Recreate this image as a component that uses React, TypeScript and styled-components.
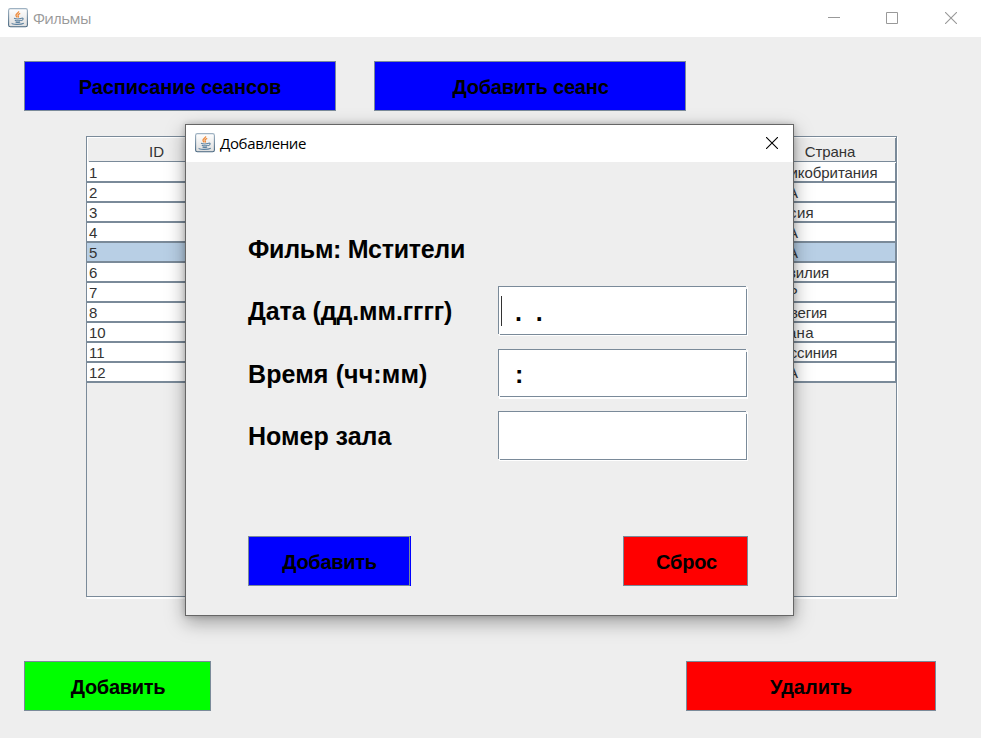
import React from "react";
import styled, { createGlobalStyle } from "styled-components";

const Global = createGlobalStyle`
  * { box-sizing: border-box; }
  html, body { margin: 0; background: #eeeeee; }
  body { width: 981px; height: 738px; overflow: hidden; font-family: "Liberation Sans", Arial, sans-serif; }
`;

const Frame = styled.div`
  position: relative;
  width: 981px;
  height: 738px;
  background: #eeeeee;
  overflow: hidden;
`;

const TitleBar = styled.header<{ $dialog?: boolean }>`
  display: flex;
  align-items: center;
  height: 37px;
  padding: ${(p) => (p.$dialog ? "0 15px 2px 9px" : "0 24px 1px 8px")};
  background: #ffffff;
`;

const Title = styled.span<{ $active?: boolean }>`
  flex: 1;
  margin-left: 5px;
  font: 15px/20px "Open Sans", "Noto Sans", sans-serif;
  letter-spacing: ${(p) => (p.$active ? "-0.35px" : "-0.6px")};
  color: ${(p) => (p.$active ? "#000000" : "#999999")};
`;

const WindowControls = styled.div`
  display: grid;
  grid-template-columns: 58px 59px 12px;
  color: #999999;
`;

const Glyph = styled.svg`
  display: block;
`;

const TopActions = styled.div`
  display: flex;
  gap: 38px;
  padding: 24px 24px 0;
`;

const BottomActions = styled.div`
  display: flex;
  justify-content: space-between;
  padding: 64px 45px 0 24px;
`;

const Button = styled.button<{ $color: string; $width: number; $spacing?: number; $nudge?: number }>`
  width: ${(p) => p.$width}px;
  height: 50px;
  padding: 1px 0 0 ${(p) => p.$nudge ?? 0}px;
  border: 1px solid #7a8a99;
  border-radius: 0;
  background: ${(p) => p.$color};
  color: #000000;
  font: bold 20px/24px "Liberation Sans", Arial, sans-serif;
  letter-spacing: ${(p) => p.$spacing ?? 0}px;
`;

const FocusEdge = styled.div`
  padding-right: 1px;
  background: #0000ff;
`;

const TablePane = styled.section`
  width: 811px;
  height: 461px;
  margin: 25px 0 0 86px;
  border: 1px solid #7a8a99;
  box-shadow: 1px 1px 0 #ffffff, 1px 2px 0 #ffffff;
`;

const TableHead = styled.div`
  display: grid;
  grid-template-columns: 133px repeat(4, 135.5px) 130px;
  height: 26px;
  padding: 2px 1px 1px 2px;
  border-top: 1px solid #ffffff;
  border-left: 1px solid #ffffff;
  background: linear-gradient(#7a8a99, #7a8a99) 807px 0 / 1px 24px no-repeat,
    linear-gradient(#7a8a99, #7a8a99) 1px 23px / 807px 1px no-repeat,
    linear-gradient(#ffffff, #ffffff) 0 24px / 100% 1px no-repeat, #eeeeee;
`;

const HeadCell = styled.span`
  font-size: 15px;
  line-height: 24px;
  letter-spacing: -0.1px;
  text-align: center;
  color: #333333;
`;

const Row = styled.div<{ $selected?: boolean }>`
  display: grid;
  grid-template-columns: 674px 1fr;
  height: 20px;
  border-bottom: 2px solid #7a8a99;
  border-right: 1px solid #7a8a99;
  background: ${(p) => (p.$selected ? "#b8cfe5" : "#ffffff")};
`;

const Cell = styled.span<{ $spacing?: number }>`
  padding-left: 2px;
  font-size: 15px;
  line-height: 19px;
  letter-spacing: ${(p) => p.$spacing ?? 0}px;
  color: #333333;
  white-space: nowrap;
`;

const Dialog = styled.div`
  position: absolute;
  left: 185px;
  top: 124px;
  width: 609px;
  height: 492px;
  border: 1px solid #666666;
  background: #eeeeee;
  box-shadow: 0 6px 18px rgba(0, 0, 0, 0.35), 0 0 6px rgba(0, 0, 0, 0.2);
`;

const Form = styled.div`
  display: grid;
  grid-template-columns: 250px 249px;
  grid-template-rows: 62px 63px 62px 49px;
  padding: 62px 0 0 62px;
`;

const Label = styled.label<{ $spacing?: number }>`
  grid-column: 1;
  padding-top: 11px;
  font: bold 25px/29px "Liberation Sans", Arial, sans-serif;
  letter-spacing: ${(p) => p.$spacing ?? 0}px;
  white-space: pre;
  color: #000000;
`;

const Field = styled.div<{ $short?: boolean }>`
  position: relative;
  grid-column: 2;
  display: flex;
  align-items: center;
  width: 249px;
  height: ${(p) => (p.$short ? 48 : 49)}px;
  padding-left: 2px;
  border: 1px solid #7a8a99;
  background: #ffffff;
  box-shadow: 1px 1px 0 #ffffff, 1px ${(p) => (p.$short ? 2 : 1)}px 0 #ffffff;
  font: bold 25px/29px "Liberation Sans", Arial, sans-serif;
  white-space: pre;

  /* Bevel notches in the etched border's corners */
  &::before, &::after { content: ""; position: absolute; background: #f6f6f6; }
  &::before { right: -1px; top: -1px; width: 1px; height: 3px; }
  &::after { left: -1px; bottom: -1px; width: 2px; height: 1px; }
`;

const Caret = styled.i`
  width: 1px;
  height: 30px;
  background: #333333;
`;

const Mask = styled.span<{ $caret?: boolean }>`
  padding-top: 3px;
  margin-left: ${(p) => (p.$caret ? -1 : 0)}px;
`;

const FormActions = styled.div`
  display: flex;
  justify-content: space-between;
  padding: 76px 45px 0 62px;
`;

function JavaIcon() {
  return (
    <Glyph width="20" height="20" viewBox="0 0 20 20" fill="none">
      <defs>
        <linearGradient id="tile" x1="0" y1="0" x2="0" y2="1">
          <stop offset="0" stopColor="#ffffff" />
          <stop offset="1" stopColor="#dedede" />
        </linearGradient>
        <linearGradient id="edge" x1="0" y1="0" x2="0" y2="1">
          <stop offset="0" stopColor="#9fb2c2" />
          <stop offset="1" stopColor="#45647e" />
        </linearGradient>
      </defs>
      <rect x=".6" y=".6" width="18.8" height="18.2" rx="1.8" fill="url(#tile)" stroke="url(#edge)" strokeWidth="1.1" />
      <path d="M10.6 3.2c.8 1.6-3.2 2.6-2.6 4.3.2.8.9 1.3 1.3 1.9M12.2 5.4c-1.6.7-2.7 1.5-2 2.4.5.7.4 1.1-.2 1.7" stroke="#ee8b3c" strokeWidth="1.3" />
      <path d="M6 10.3c1.8.7 5.4.7 7.6 0M6.8 12.2c1.7.7 4.4.7 6 0M7.5 14c1.4.6 3.4.6 4.7 0M13.4 10.2c2.5-.5 2.3 1.8-.3 2.5M4.2 15.1c-1.4 1.5 8.5 1.9 11.6.1" stroke="#5d82a1" strokeWidth="1.1" />
    </Glyph>
  );
}

function CloseIcon({ color = "currentColor" }: { color?: string }) {
  return (
    <Glyph width="12" height="12" viewBox="0 0 12 12">
      <path d="M0 0l12 12M12 0L0 12" stroke={color} strokeWidth="1.1" />
    </Glyph>
  );
}

const films = [
  { id: 1, country: "Великобритания", spacing: -0.05 },
  { id: 2, country: "США", spacing: 0.25 },
  { id: 3, country: "Россия", spacing: 0.3 },
  { id: 4, country: "США", spacing: 0.25 },
  { id: 5, country: "США", spacing: 0.25 },
  { id: 6, country: "Бразилия", spacing: -0.1 },
  { id: 7, country: "ЮАР" },
  { id: 8, country: "Норвегия", spacing: -0.2 },
  { id: 10, country: "Гайана", spacing: 0.3 },
  { id: 11, country: "Абиссиния", spacing: -0.1 },
  { id: 12, country: "США", spacing: 0.25 },
];

function AddDialog() {
  return (
    <Dialog role="dialog">
      <TitleBar $dialog>
        <JavaIcon />
        <Title $active>Добавление</Title>
        <CloseIcon color="#000000" />
      </TitleBar>
      <Form>
        <Label $spacing={-0.27}>Фильм: Мстители</Label>
        <Label $spacing={-0.08}>Дата (дд.мм.гггг)</Label>
        <Field>
          <Caret />
          <Mask $caret>{"  .  ."}</Mask>
        </Field>
        <Label $spacing={0.12}>Время (чч:мм)</Label>
        <Field $short>
          <Mask>{"  :"}</Mask>
        </Field>
        <Label>Номер зала</Label>
        <Field />
      </Form>
      <FormActions>
        <FocusEdge>
          <Button $color="#0000ff" $width={162} $spacing={-0.3} $nudge={1}>Добавить</Button>
        </FocusEdge>
        <Button $color="#ff0000" $width={125} $spacing={-0.2} $nudge={2}>Сброс</Button>
      </FormActions>
    </Dialog>
  );
}

export default function App() {
  return (
    <>
      <Global />
      <Frame>
        <TitleBar>
          <JavaIcon />
          <Title>Фильмы</Title>
          <WindowControls>
            <Glyph width="12" height="12">
              <path d="M0 5.5h12" stroke="currentColor" />
            </Glyph>
            <Glyph width="12" height="12">
              <path d="M.5.5h11v11h-11z" fill="none" stroke="currentColor" />
            </Glyph>
            <CloseIcon />
          </WindowControls>
        </TitleBar>
        <TopActions>
          <Button $color="#0000ff" $width={312} $spacing={-0.1}>Расписание сеансов</Button>
          <Button $color="#0000ff" $width={312} $spacing={-0.2} $nudge={1}>Добавить сеанс</Button>
        </TopActions>
        <TablePane>
          <TableHead>
            <HeadCell>ID</HeadCell>
            <span />
            <span />
            <span />
            <span />
            <HeadCell>Страна</HeadCell>
          </TableHead>
          {films.map((film) => (
            <Row key={film.id} $selected={film.id === 5}>
              <Cell>{film.id}</Cell>
              <Cell $spacing={film.spacing}>{film.country}</Cell>
            </Row>
          ))}
        </TablePane>
        <BottomActions>
          <Button $color="#00ff00" $width={187} $spacing={-0.3} $nudge={1}>Добавить</Button>
          <Button $color="#ff0000" $width={250}>Удалить</Button>
        </BottomActions>
        <AddDialog />
      </Frame>
    </>
  );
}
